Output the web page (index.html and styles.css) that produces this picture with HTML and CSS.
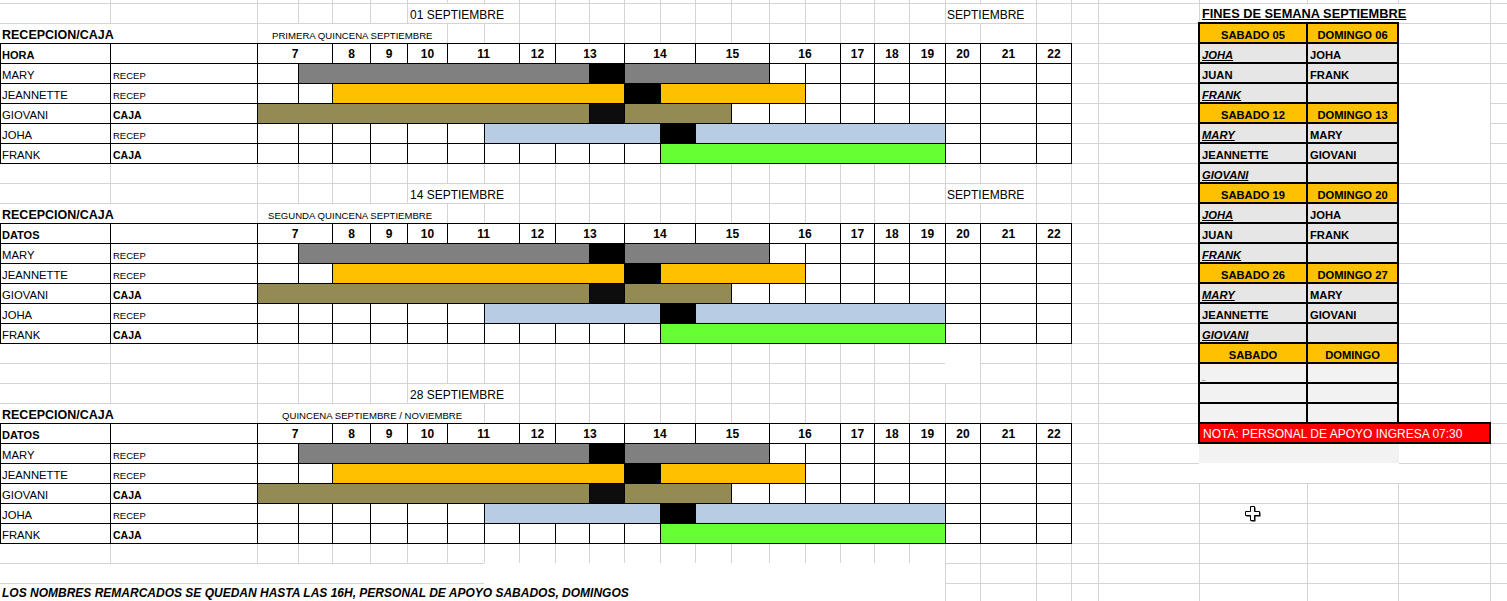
FILE: index.html
```html
<!DOCTYPE html>
<html lang="es">
<head>
<meta charset="utf-8">
<title>Horario Recepción / Caja — Septiembre</title>
<link rel="stylesheet" href="styles.css">
</head>
<body>
<div class="sheet">
  <div class="left">
    <section class="block">
      <div class="srow">
        <span class="lbl date">01 SEPTIEMBRE</span>
        <span class="lbl month">SEPTIEMBRE</span>
      </div>
      <div class="srow">
        <span class="lbl rc">RECEPCION/CAJA</span>
        <span class="lbl sub sub1">PRIMERA QUINCENA SEPTIEMBRE</span>
      </div>
      <div class="sched">
        <span class="hd">HORA</span><i></i><span class="hr s2">7</span><span class="hr">8</span><span class="hr">9</span><span class="hr">10</span><span class="hr s2">11</span><span class="hr">12</span><span class="hr s2">13</span><span class="hr s2">14</span><span class="hr s2">15</span><span class="hr s2">16</span><span class="hr">17</span><span class="hr">18</span><span class="hr">19</span><span class="hr">20</span><span class="hr">21</span><span class="hr">22</span>
        <span class="nm">MARY</span><span class="role">RECEP</span><i></i><i class="gray s8"></i><i class="brk"></i><i class="gray s4"></i><i></i><i></i><i></i><i></i><i></i><i></i><i></i><i></i>
        <span class="nm">JEANNETTE</span><span class="role">RECEP</span><i></i><i></i><i class="yel s8"></i><i class="brk"></i><i class="yel s4"></i><i></i><i></i><i></i><i></i><i></i><i></i><i></i>
        <span class="nm">GIOVANI</span><span class="caja">CAJA</span><i class="oli s9"></i><i class="brk dk"></i><i class="oli s3"></i><i></i><i></i><i></i><i></i><i></i><i></i><i></i><i></i><i></i>
        <span class="nm">JOHA</span><span class="role">RECEP</span><i></i><i></i><i></i><i></i><i></i><i></i><i class="blu s5"></i><i class="brk"></i><i class="blu s7"></i><i></i><i></i><i></i>
        <span class="nm">FRANK</span><span class="caja">CAJA</span><i></i><i></i><i></i><i></i><i></i><i></i><i></i><i></i><i></i><i></i><i></i><i class="grn s8"></i><i></i><i></i><i></i>
      </div>
    </section>

    <div class="blank"></div>

    <section class="block">
      <div class="srow">
        <span class="lbl date">14 SEPTIEMBRE</span>
        <span class="lbl month">SEPTIEMBRE</span>
      </div>
      <div class="srow">
        <span class="lbl rc">RECEPCION/CAJA</span>
        <span class="lbl sub sub2">SEGUNDA QUINCENA SEPTIEMBRE</span>
      </div>
      <div class="sched">
        <span class="hd">DATOS</span><i></i><span class="hr s2">7</span><span class="hr">8</span><span class="hr">9</span><span class="hr">10</span><span class="hr s2">11</span><span class="hr">12</span><span class="hr s2">13</span><span class="hr s2">14</span><span class="hr s2">15</span><span class="hr s2">16</span><span class="hr">17</span><span class="hr">18</span><span class="hr">19</span><span class="hr">20</span><span class="hr">21</span><span class="hr">22</span>
        <span class="nm">MARY</span><span class="role">RECEP</span><i></i><i class="gray s8"></i><i class="brk"></i><i class="gray s4"></i><i></i><i></i><i></i><i></i><i></i><i></i><i></i><i></i>
        <span class="nm">JEANNETTE</span><span class="role">RECEP</span><i></i><i></i><i class="yel s8"></i><i class="brk"></i><i class="yel s4"></i><i></i><i></i><i></i><i></i><i></i><i></i><i></i>
        <span class="nm">GIOVANI</span><span class="caja">CAJA</span><i class="oli s9"></i><i class="brk dk"></i><i class="oli s3"></i><i></i><i></i><i></i><i></i><i></i><i></i><i></i><i></i><i></i>
        <span class="nm">JOHA</span><span class="role">RECEP</span><i></i><i></i><i></i><i></i><i></i><i></i><i class="blu s5"></i><i class="brk"></i><i class="blu s7"></i><i></i><i></i><i></i>
        <span class="nm">FRANK</span><span class="caja">CAJA</span><i></i><i></i><i></i><i></i><i></i><i></i><i></i><i></i><i></i><i></i><i></i><i class="grn s8"></i><i></i><i></i><i></i>
      </div>
    </section>

    <div class="srow blank tall"><span class="hole"></span></div>

    <section class="block">
      <div class="srow">
        <span class="lbl date">28 SEPTIEMBRE</span>
      </div>
      <div class="srow">
        <span class="lbl rc">RECEPCION/CAJA</span>
        <span class="lbl sub sub3">QUINCENA SEPTIEMBRE / NOVIEMBRE</span>
      </div>
      <div class="sched">
        <span class="hd">DATOS</span><i></i><span class="hr s2">7</span><span class="hr">8</span><span class="hr">9</span><span class="hr">10</span><span class="hr s2">11</span><span class="hr">12</span><span class="hr s2">13</span><span class="hr s2">14</span><span class="hr s2">15</span><span class="hr s2">16</span><span class="hr">17</span><span class="hr">18</span><span class="hr">19</span><span class="hr">20</span><span class="hr">21</span><span class="hr">22</span>
        <span class="nm">MARY</span><span class="role">RECEP</span><i></i><i class="gray s8"></i><i class="brk"></i><i class="gray s4"></i><i></i><i></i><i></i><i></i><i></i><i></i><i></i><i></i>
        <span class="nm">JEANNETTE</span><span class="role">RECEP</span><i></i><i></i><i class="yel s8"></i><i class="brk"></i><i class="yel s4"></i><i></i><i></i><i></i><i></i><i></i><i></i><i></i>
        <span class="nm">GIOVANI</span><span class="caja">CAJA</span><i class="oli s9"></i><i class="brk dk"></i><i class="oli s3"></i><i></i><i></i><i></i><i></i><i></i><i></i><i></i><i></i><i></i>
        <span class="nm">JOHA</span><span class="role">RECEP</span><i></i><i></i><i></i><i></i><i></i><i></i><i class="blu s5"></i><i class="brk"></i><i class="blu s7"></i><i></i><i></i><i></i>
        <span class="nm">FRANK</span><span class="caja">CAJA</span><i></i><i></i><i></i><i></i><i></i><i></i><i></i><i></i><i></i><i></i><i></i><i class="grn s8"></i><i></i><i></i><i></i>
      </div>
    </section>

    <div class="blank"></div>

    <div class="footer">
      <p class="note">LOS NOMBRES REMARCADOS SE QUEDAN HASTA LAS 16H, PERSONAL DE APOYO SABADOS, DOMINGOS</p>
    </div>
  </div>

  <div class="right">
    <div class="wk-title">FINES DE SEMANA SEPTIEMBRE</div>
    <div class="wk">
      <div class="hdr">SABADO 05</div><div class="hdr">DOMINGO 06</div>
      <div class="u">JOHA</div><div>JOHA</div>
      <div>JUAN</div><div>FRANK</div>
      <div class="u">FRANK</div><div></div>
      <div class="hdr">SABADO 12</div><div class="hdr">DOMINGO 13</div>
      <div class="u">MARY</div><div>MARY</div>
      <div>JEANNETTE</div><div>GIOVANI</div>
      <div class="u">GIOVANI</div><div></div>
      <div class="hdr">SABADO 19</div><div class="hdr">DOMINGO 20</div>
      <div class="u">JOHA</div><div>JOHA</div>
      <div>JUAN</div><div>FRANK</div>
      <div class="u">FRANK</div><div></div>
      <div class="hdr">SABADO 26</div><div class="hdr">DOMINGO 27</div>
      <div class="u">MARY</div><div>MARY</div>
      <div>JEANNETTE</div><div>GIOVANI</div>
      <div class="u">GIOVANI</div><div></div>
      <div class="hdr">SABADO</div><div class="hdr">DOMINGO</div>
      <div class="em"><span class="dash">_</span></div><div class="em"></div>
      <div class="em"></div><div class="em"></div>
      <div class="em"></div><div class="em"></div>
    </div>
    <div class="fill"></div>
    <div class="nota">NOTA: PERSONAL DE APOYO INGRESA 07:30</div>
    <div class="below"></div>
  </div>

  <svg class="cursor" width="16" height="16" viewBox="0 0 16 16" aria-hidden="true">
    <path d="M6.5 1.5h4v5h5v4h-5v5h-4v-5h-5v-4h5z" fill="#000"/>
    <path d="M5.5 .5h4v5h5v4h-5v5h-4v-5h-5v-4h5z" fill="#fff" stroke="#000" stroke-width="1"/>
  </svg>
</div>
</body>
</html>
```

FILE: styles.css
```css
:root {
  --grid: #d4d4d4;
  --v: linear-gradient(#d4d4d4, #d4d4d4);
  --cols: 110px 147px 41px 34px 38px 37px 40px 37px 35px 36px 34px 35px 36px 35px 36px 38px 36px 35px 34px 35px 36px 35px 56px 35px;
  --tcols: 109px 146px 40px 33px 37px 36px 39px 36px 34px 35px 33px 34px 35px 34px 35px 37px 35px 34px 33px 34px 35px 34px 55px 34px;
}

* { box-sizing: border-box; }

html, body {
  margin: 0;
  background: #fff;
}

body {
  font-family: "Liberation Sans", Arial, sans-serif;
  color: #000;
}

.sheet {
  position: relative;
  display: flex;
  width: 1507px;
  height: 601px;
  overflow: hidden;
  background:
    linear-gradient(var(--grid) 1px, transparent 1px) 0 3px / 100% 20px repeat-y,
    var(--v) 110px 0 / 1px 100% no-repeat,
    var(--v) 257px 0 / 1px 100% no-repeat,
    var(--v) 298px 0 / 1px 100% no-repeat,
    var(--v) 332px 0 / 1px 100% no-repeat,
    var(--v) 370px 0 / 1px 100% no-repeat,
    var(--v) 407px 0 / 1px 100% no-repeat,
    var(--v) 447px 0 / 1px 100% no-repeat,
    var(--v) 484px 0 / 1px 100% no-repeat,
    var(--v) 519px 0 / 1px 100% no-repeat,
    var(--v) 555px 0 / 1px 100% no-repeat,
    var(--v) 589px 0 / 1px 100% no-repeat,
    var(--v) 624px 0 / 1px 100% no-repeat,
    var(--v) 660px 0 / 1px 100% no-repeat,
    var(--v) 695px 0 / 1px 100% no-repeat,
    var(--v) 731px 0 / 1px 100% no-repeat,
    var(--v) 769px 0 / 1px 100% no-repeat,
    var(--v) 805px 0 / 1px 100% no-repeat,
    var(--v) 840px 0 / 1px 100% no-repeat,
    var(--v) 874px 0 / 1px 100% no-repeat,
    var(--v) 909px 0 / 1px 100% no-repeat,
    var(--v) 945px 0 / 1px 100% no-repeat,
    var(--v) 980px 0 / 1px 100% no-repeat,
    var(--v) 1036px 0 / 1px 100% no-repeat,
    var(--v) 1071px 0 / 1px 100% no-repeat,
    var(--v) 1098px 0 / 1px 100% no-repeat,
    var(--v) 1199px 0 / 1px 100% no-repeat,
    var(--v) 1307px 0 / 1px 100% no-repeat,
    var(--v) 1398px 0 / 1px 100% no-repeat,
    var(--v) 1490px 0 / 1px 100% no-repeat,
    #fff;
}

/* ---------- left: schedules ---------- */
.left {
  flex: none;
  width: 1199px;
  padding-top: 3px;
}

.srow {
  display: grid;
  grid-template-columns: var(--cols);
  height: 20px;
}

.lbl {
  justify-self: start;
  align-self: stretch;
  margin-top: 1px;
  display: flex;
  align-items: flex-end;
  white-space: nowrap;
  background: #fff;
}

.date,
.month {
  font-size: 12px;
  padding: 0 3px 1px 2px;
}

.date { grid-column: 7; margin-left: 1px; }
.month { grid-column: 22; margin-left: 1px; padding-left: 1px; }

.rc {
  grid-column: 1;
  font-weight: bold;
  font-size: 12.5px;
  padding: 0 2px 1px 2px;
}

.sub {
  grid-column: 3;
  font-size: 9.6px;
  padding: 0 2px 2px;
}

.sub1 { margin-left: 13px; }
.sub2 { margin-left: 9px; }
.sub3 { margin-left: 23px; }

.sched {
  display: grid;
  grid-template-columns: var(--tcols);
  grid-auto-rows: 19px;
  gap: 1px;
  padding: 1px;
  width: max-content;
  background: #000;
  margin-bottom: -1px;
}

.sched > * {
  background: #fff;
  display: flex;
  align-items: flex-end;
  padding: 0 0 2px 1px;
  white-space: nowrap;
  overflow: hidden;
  font-style: normal;
}

.sched .nm { font-size: 11.3px; }
.sched .hd { font-size: 11px; font-weight: bold; }
.sched .hr { font-size: 12px; font-weight: bold; justify-content: center; padding-left: 0; }
.sched .role { font-size: 9.5px; padding-left: 2px; }
.sched .caja { font-size: 10.5px; font-weight: bold; padding-left: 2px; }

.s2 { grid-column: span 2; }
.s3 { grid-column: span 3; }
.s4 { grid-column: span 4; }
.s5 { grid-column: span 5; }
.s7 { grid-column: span 7; }
.s8 { grid-column: span 8; }
.s9 { grid-column: span 9; }

.sched .gray { background: #808080; }
.sched .yel { background: #ffc000; }
.sched .oli { background: #948a54; }
.sched .blu { background: #b8cce4; }
.sched .grn { background: #66ff33; }
.sched .brk { background: #000; }
.sched .brk.dk { background: #0d0d0d; }

.blank { height: 20px; }
.blank.tall { height: 40px; }

.hole {
  grid-column: 22;
  margin-top: 1px;
  height: 39px;
  background: #fff;
}

.footer {
  width: 945px;
  height: 40px;
  padding-top: 20px;
  background:
    linear-gradient(var(--grid), var(--grid)) 0 0 / 484px 1px no-repeat,
    linear-gradient(var(--grid), var(--grid)) 0 20px / 484px 1px no-repeat,
    #fff;
}

.note {
  margin: 0;
  height: 20px;
  display: flex;
  align-items: flex-end;
  padding: 0 0 3px 2px;
  font-size: 12px;
  font-weight: bold;
  font-style: italic;
  white-space: nowrap;
}

/* ---------- right: weekends ---------- */
.right {
  flex: 1;
  display: grid;
  grid-template-columns: 200px 1fr;
  grid-template-rows: 19px 402px auto auto;
  align-content: start;
  padding-top: 3px;
}

.wk-title {
  grid-column: 1 / -1;
  justify-self: start;
  margin: 1px 0 0 1px;
  padding: 0 3px 1px 2px;
  display: flex;
  align-items: flex-end;
  background: #fff;
  font-weight: bold;
  font-size: 12.8px;
  text-decoration: underline;
  white-space: nowrap;
}

.wk {
  grid-column: 1;
  grid-row: 2;
  margin-left: -1px;
  width: 201px;
  display: grid;
  grid-template-columns: 106px 89px;
  grid-auto-rows: 18px;
  gap: 2px;
  padding: 2px;
  background: #000;
}

.wk > * {
  display: flex;
  align-items: flex-end;
  padding: 0 0 1px 2px;
  background: #e7e6e6;
  font-weight: bold;
  font-size: 11.2px;
  white-space: nowrap;
  overflow: hidden;
}

.wk > .hdr {
  background: #ffc000;
  justify-content: center;
  padding-left: 0;
}

.wk > .em { background: #f2f2f2; }

.wk > .u {
  font-style: italic;
  text-decoration: underline;
}

.dash {
  font-size: 6px;
  font-weight: normal;
  line-height: 1;
}

.fill {
  grid-column: 2;
  grid-row: 2;
  align-self: start;
  width: 91px;
  height: 79px;
  margin-top: 62px;
  background: #fff;
}

.nota {
  grid-column: 1 / -1;
  grid-row: 3;
  width: 293px;
  height: 22px;
  margin: -2px 0 0 -1px;
  border: 2px solid #000;
  background: #ff0000;
  color: #fff;
  font-size: 12px;
  display: flex;
  align-items: flex-end;
  padding: 0 0 1px 3px;
  white-space: nowrap;
}

.below {
  grid-column: 1;
  grid-row: 4;
  height: 39px;
  background:
    linear-gradient(#f2f2f2, #f2f2f2) 0 0 / 100% 19px no-repeat,
    #fff;
}

.cursor {
  position: absolute;
  left: 1245px;
  top: 506px;
}
```
